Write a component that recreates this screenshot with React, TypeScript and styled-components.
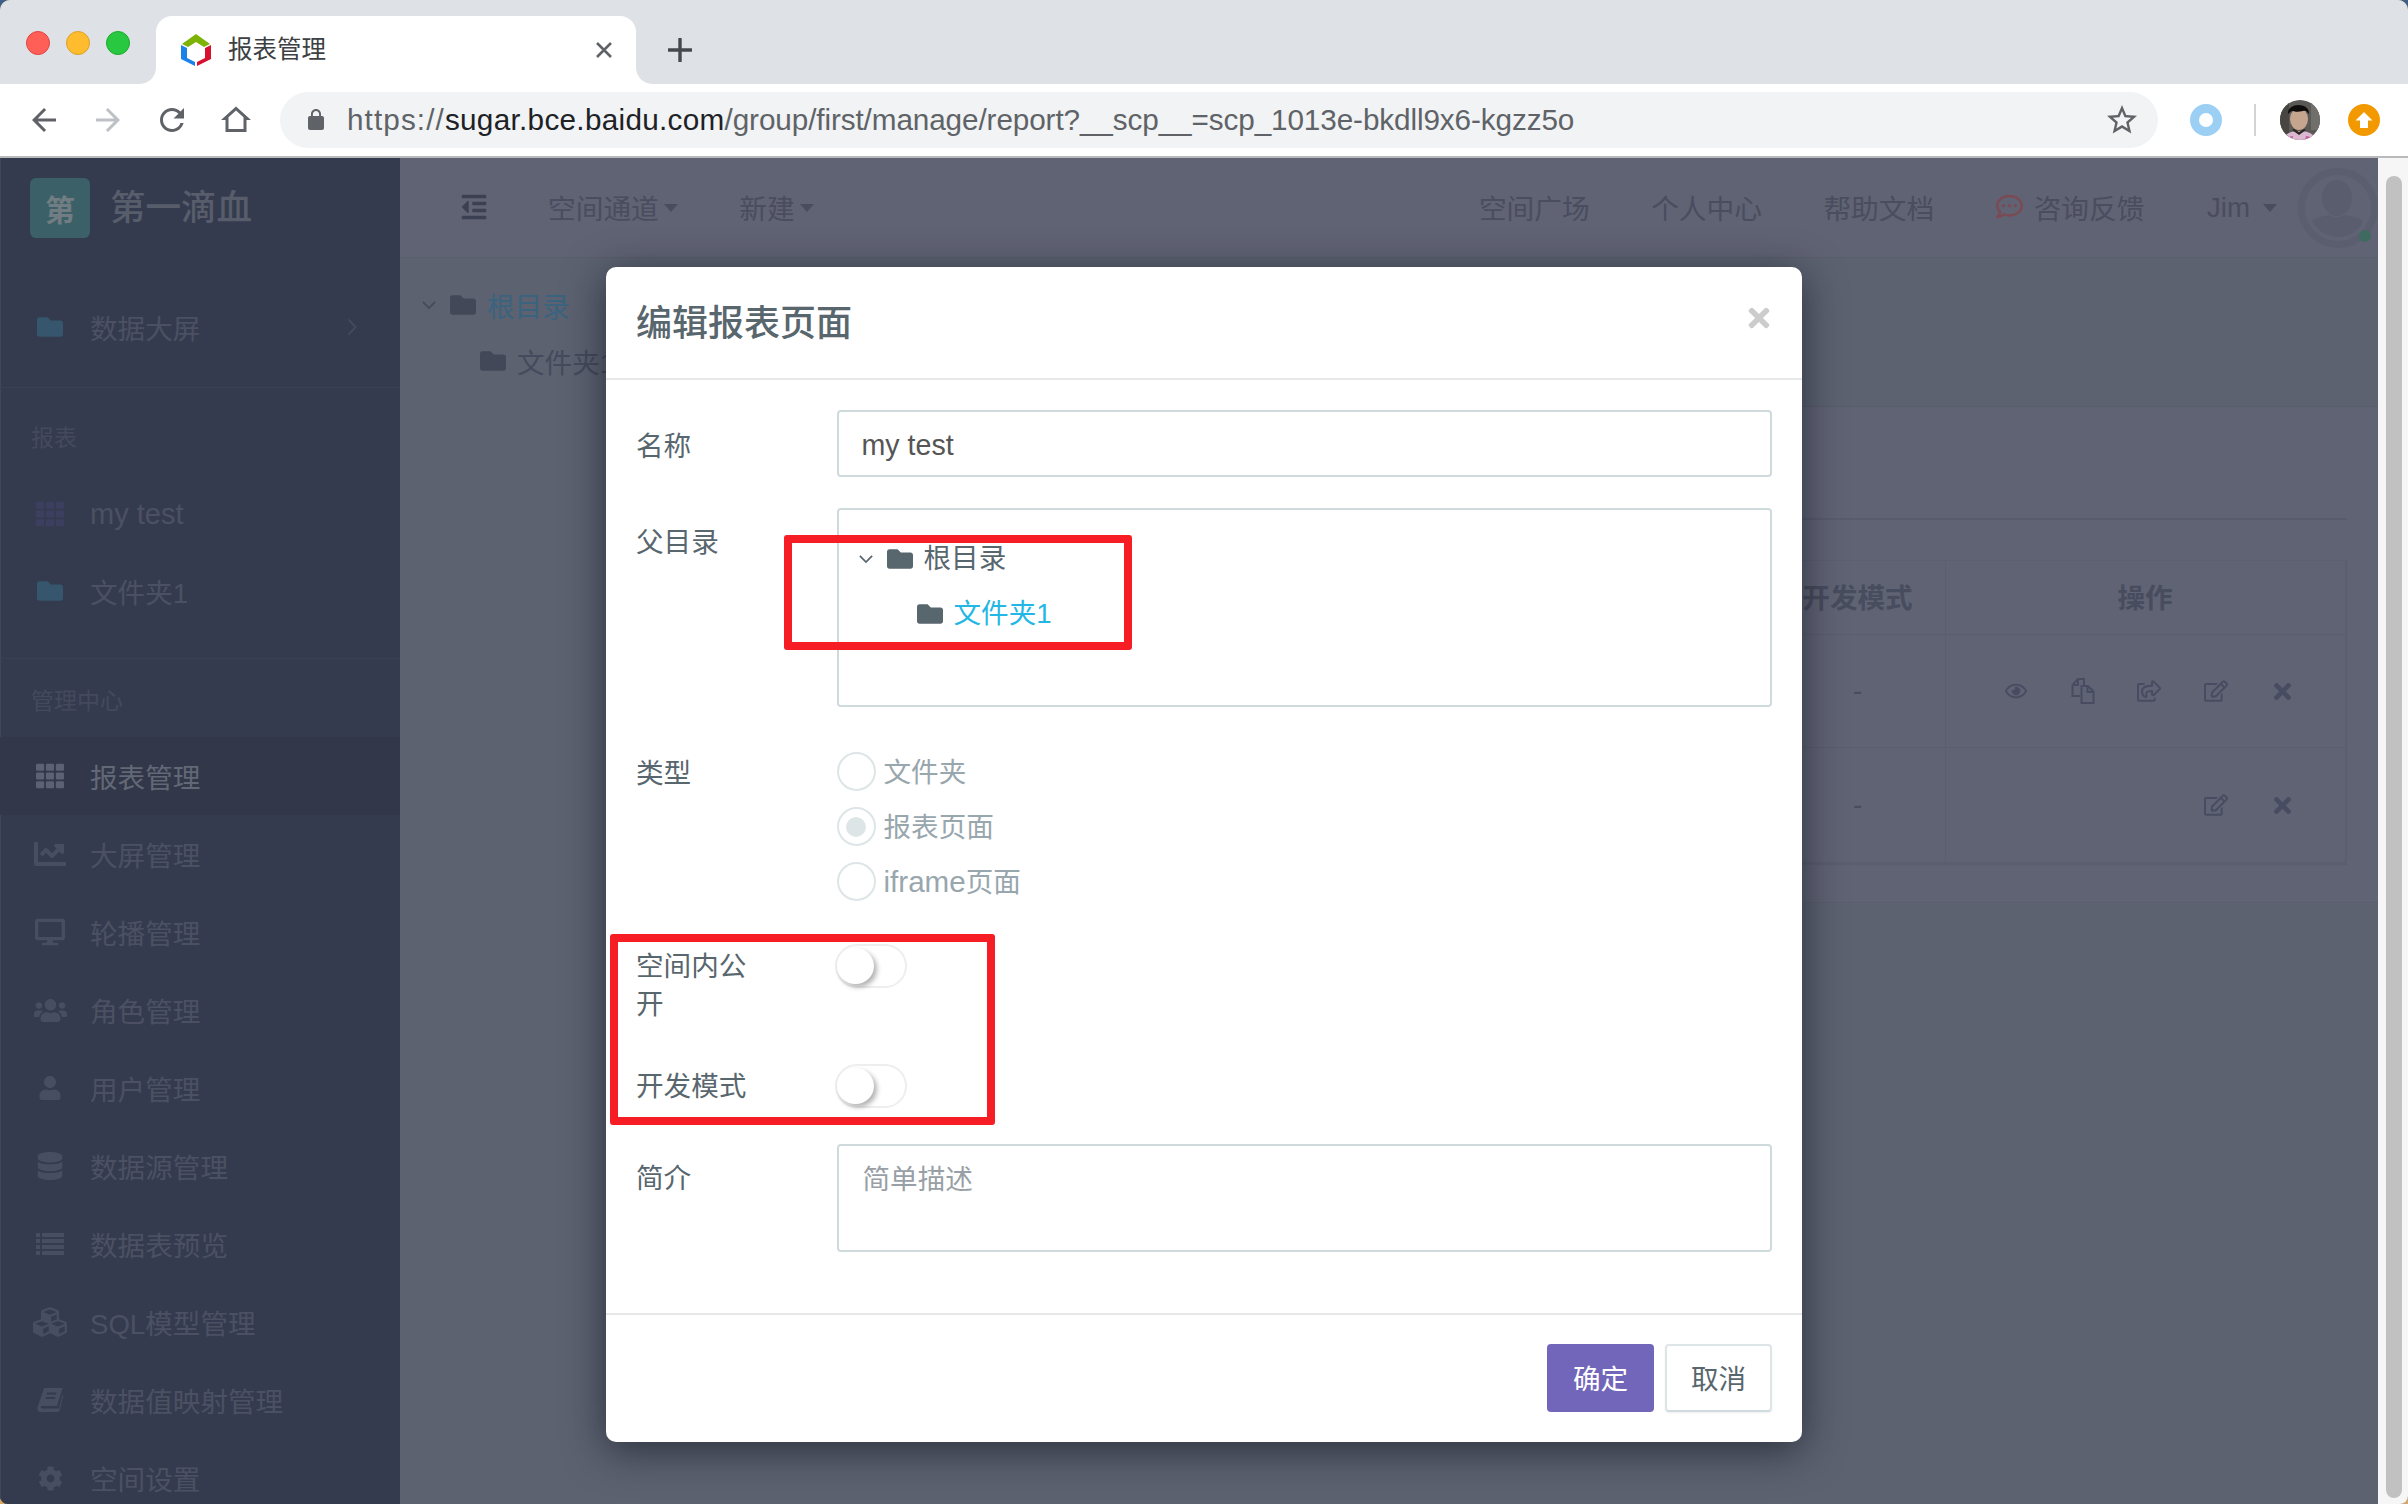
import React from 'react';
import styled, { createGlobalStyle } from 'styled-components';
import {
  FaTh, FaChartLine, FaDesktop, FaUsers, FaUser, FaDatabase, FaCubes, FaCog,
  FaFolder, FaOutdent, FaRegCommentDots, FaRegEye,
  FaRegShareSquare, FaRegEdit, FaTimes,
} from 'react-icons/fa';

const SANS = `'Liberation Sans', 'Noto Sans CJK SC', sans-serif`;

const Global = createGlobalStyle`
  html, body { margin: 0; padding: 0; height: 100%; background: #3f5f86; overflow: hidden; }
  #root { height: 100%; }
  * { box-sizing: border-box; }
  body { font-family: ${SANS}; }
`;

const Win = styled.div`
  width: 2408px; height: 1504px; display: flex; flex-direction: column; background: #d9a766;
  border-radius: 10px 10px 0 0; overflow: hidden; position: relative;
`;

/* ---------- browser chrome ---------- */
const TitleBar = styled.div`
  height: 84px; background: #dee1e6; display: flex; align-items: flex-start; flex: none;
`;
const Lights = styled.div`
  display: flex; gap: 16px; padding: 31px 0 0 26px; width: 156px; flex: none;
`;
const Light = styled.span<{ $c: string; $b: string }>`
  width: 24px; height: 24px; border-radius: 50%; background: ${p => p.$c}; border: 1px solid ${p => p.$b};
`;
const Tab = styled.div`
  position: relative; margin-top: 16px; width: 480px; height: 68px; background: #fff;
  border-radius: 16px 16px 0 0; display: flex; align-items: center; padding: 0 23px 0 24px; flex: none;
  &::before, &::after { content: ''; position: absolute; bottom: 0; width: 16px; height: 16px; }
  &::before { left: -16px; background: radial-gradient(circle at 0 0, transparent 15.5px, #fff 16px); }
  &::after { right: -16px; background: radial-gradient(circle at 100% 0, transparent 15.5px, #fff 16px); }
`;
const TabTitle = styled.span`
  margin-left: 16px; font-size: 24.5px; color: #3c4043; flex: 1; line-height: 1;
`;
const NewTab = styled.div`
  margin: 16px 0 0 32px; height: 68px; display: flex; align-items: center;
`;
const Toolbar = styled.div`
  height: 74px; background: #fff; border-bottom: 2px solid #b9babc; display: flex; align-items: flex-start; flex: none;
  padding: 8px 0 0 0;
`;
const ToolIcons = styled.div`
  display: flex; width: 280px; height: 56px; align-items: center; padding-left: 26px; gap: 28px; flex: none;
`;
const Omni = styled.div`
  width: 1878px; height: 56px; border-radius: 28px; background: #f1f3f4; display: flex; align-items: center;
  padding: 0 18px 0 24px; flex: none;
`;
const Url = styled.div`
  margin-left: 19px; flex: 1; font-size: 29.7px; color: #5f6368; white-space: nowrap; line-height: 1;
`;
const UrlScheme = styled.span` letter-spacing: 1.1px; `;
const UrlHost = styled.span` color: #202124; letter-spacing: 0.3px; `;
const UrlPath = styled.span` letter-spacing: -0.1px; `;
const Exts = styled.div`
  flex: 1; height: 56px; display: flex; align-items: center; padding-left: 32px;
`;
const ExtRing = styled.span`
  width: 32px; height: 32px; border-radius: 50%; border: 9px solid #9ccff4; flex: none;
`;
const ExtDivider = styled.span`
  width: 2px; height: 32px; background: #d2d3d5; margin: 0 24px 0 32px; flex: none;
`;
const ExtUpdate = styled.span`
  width: 32px; height: 32px; border-radius: 50%; background: #f29900; margin-left: 28px; flex: none;
  display: flex; align-items: center; justify-content: center;
`;

/* ---------- page ---------- */
const Page = styled.div`
  flex: 1; display: flex; min-height: 0; background: #5c6270; overflow: hidden; border-radius: 0 0 8px 8px;
`;
const Sidebar = styled.aside`
  width: 400px; flex: none; background: #353b4e; overflow: hidden; box-shadow: inset 1px 0 0 #41475a;
`;
const Brand = styled.div`
  height: 130px; padding: 20px 0 0 30px; display: flex; align-items: flex-start; gap: 20px;
`;
const BrandBox = styled.div`
  width: 60px; height: 60px; border-radius: 6px; background: #3c6068; color: #717d82; font-size: 30px; font-weight: 700;
  display: flex; align-items: center; justify-content: center;
`;
const BrandName = styled.div`
  font-size: 35.5px; line-height: 60px; color: #585d6c; font-weight: 500;
`;
const NavRow = styled.div<{ $active?: boolean; $h?: number; $fs?: number }>`
  height: ${p => p.$h ?? 78}px; display: flex; align-items: center; padding-left: 30px; position: relative;
  background: ${p => (p.$active ? '#323749' : 'transparent')};
  color: ${p => (p.$active ? '#636876' : '#4b5163')};
  font-size: ${p => p.$fs ?? 27.6}px;
`;
const NavIcon = styled.span<{ $c?: string; $s: number }>`
  width: 40px; display: flex; justify-content: center; align-items: center; margin-right: 20px;
  color: ${p => p.$c ?? 'inherit'}; font-size: ${p => p.$s}px; flex: none;
`;
const NavChevron = styled.span`
  margin-left: auto; margin-right: 43px; display: flex;
`;
const SideDivider = styled.div<{ $t: number }>`
  margin-top: ${p => p.$t}px; height: 1px; background: #3a4053;
`;
const SideLabel = styled.div<{ $t: number; $b: number }>`
  margin: ${p => p.$t}px 0 ${p => p.$b}px 31px; font-size: 23px; line-height: 38px; color: #444a5c;
`;

const Main = styled.main`
  flex: 1; min-width: 0; display: flex; flex-direction: column;
`;
const TopBar = styled.header`
  height: 100px; flex: none; background: #606373; border-bottom: 1px solid #5a5e6d; display: flex; align-items: center;
  padding: 0 0 2px 60px; color: #494d5f; font-size: 27.7px; gap: 61.5px; overflow: visible;
`;
const TopItem = styled.span<{ $push?: boolean; $gap?: number; $shift?: number }>`
  display: flex; align-items: center; gap: ${p => p.$gap ?? 5}px; white-space: nowrap;
  ${p => (p.$push ? 'margin-left: auto;' : '')}
  ${p => (p.$shift ? `margin-right: ${p.$shift}px;` : '')}
`;
const JimName = styled.span` padding-top: 2px; `;
const Caret = styled.span`
  width: 0; height: 0; border-left: 7.5px solid transparent; border-right: 7.5px solid transparent;
  border-top: 8px solid currentColor; margin-top: 3px;
`;
const UserArea = styled.div`
  display: flex; align-items: center; margin-left: 1px; gap: 21px; flex: none;
`;
const AvatarWrap = styled.div`
  position: relative; width: 80px; height: 80px; flex: none; margin-top: 2px;
`;
const Online = styled.span`
  position: absolute; right: 7px; bottom: 6px; width: 12px; height: 12px; border-radius: 50%; background: #3f6a62;
`;
const Content = styled.div`
  flex: 1; display: flex; min-height: 0;
`;
const TreePanel = styled.div`
  width: 400px; flex: none; padding: 18.5px 0 0 22px;
`;
const TreeRow = styled.div<{ $indent?: number; $h: number }>`
  height: ${p => p.$h}px; display: flex; align-items: center; padding-left: ${p => p.$indent ?? 0}px;
  font-size: 27.6px; white-space: nowrap;
`;
const TreeArrow = styled.span<{ $c: string }>`
  width: 14px; margin-right: 14px; display: flex; justify-content: center; color: ${p => p.$c}; flex: none;
`;
const TreeFolder = styled.span<{ $c: string }>`
  display: flex; margin-right: 11px; color: ${p => p.$c}; font-size: 26px; flex: none;
`;
const TreeText = styled.span<{ $c: string }>` color: ${p => p.$c}; `;

const RightCol = styled.div`
  flex: 1; min-width: 0; display: flex; flex-direction: column;
`;
const RightHead = styled.div` height: 148px; flex: none; `;
const Card = styled.section`
  height: 497px; flex: none; background: #606373; border-top: 1px solid #585c6b; border-bottom: 1px solid #5a5e6d;
  padding: 111px 31.5px 0 0;
`;
const CardRule = styled.div`
  height: 2px; background: #585c6c; margin-bottom: 40px;
`;
const Table = styled.div`
  display: grid; grid-template-columns: 1fr 175px 400px; grid-template-rows: 74px 113px 115px;
  border-top: 1px solid #5b5f6f; border-right: 2px solid #5a5e6e; border-bottom: 2px solid #5a5e6e;
`;
const Cell = styled.div<{ $head?: boolean }>`
  display: flex; align-items: center; justify-content: center;
  border-bottom: 1px solid #5a5e6e;
  border-left: 1px solid #5a5e6e;
  color: #474c5e; font-size: 27.6px;
  font-weight: ${p => (p.$head ? 700 : 400)};
  padding-bottom: ${p => (p.$head ? 3 : 0)}px;
`;
const Actions = styled.div`
  display: flex; align-items: center; justify-content: flex-end; padding-right: 29px; color: #474c62;
  border-bottom: 1px solid #5a5e6e; border-left: 1px solid #5a5e6e;
`;
const ActionIcon = styled.span<{ $s: number }>`
  width: 66.5px; display: flex; justify-content: center; font-size: ${p => p.$s}px;
`;
const Scrollbar = styled.div`
  width: 30px; flex: none; background: #f6f6f6; padding: 18px 6px 6px 8px;
`;
const ScrollThumb = styled.div`
  height: 100%; background: #c1c1c1; border-radius: 8px;
`;

/* ---------- modal ---------- */
const Modal = styled.div`
  position: absolute; left: 606px; top: 267px; width: 1196px; height: 1175px; background: #fff; border-radius: 10px;
  box-shadow: 0 8px 40px rgba(15, 18, 30, 0.62); display: flex; flex-direction: column; color: #58666e;
`;
const ModalHead = styled.div`
  height: 113px; flex: none; border-bottom: 2px solid #e6e8e8; padding: 36px 31px 0 30px; display: flex; justify-content: space-between;
`;
const ModalTitle = styled.div`
  font-size: 36px; line-height: 42px; font-weight: 500; color: #58666e;
`;
const ModalClose = styled.span`
  color: #cccccc; font-size: 30px; display: flex; margin-right: -3px;
`;
const ModalBody = styled.div`
  flex: 1; padding: 30px 31px 0 30px;
`;
const FormRow = styled.div<{ $mb: number }>`
  display: flex; margin-bottom: ${p => p.$mb}px;
`;
const FormLabel = styled.label<{ $pt: number; $lh?: number }>`
  width: 200.5px; flex: none; padding: ${p => p.$pt}px 86px 0 0; font-size: 27.6px; line-height: ${p => p.$lh ?? 39}px; color: #58666e;
`;
const Field = styled.div<{ $h: number }>`
  width: 935px; height: ${p => p.$h}px; border: 2px solid #cfdadd; border-radius: 4px; background: #fff;
  font-size: 27.6px; color: #555; line-height: 1; flex: none;
`;
const InputField = styled(Field)`
  display: flex; align-items: center; padding: 3px 24px 0 23px; font-size: 28.6px;
`;
const Placeholder = styled.div`
  padding: 14px 24px 0; line-height: 39px; color: #98a0a6;
`;
const TreeField = styled(Field)`
  padding: 21.5px 0 0 20px;
`;
const RadioGroup = styled.div`
  display: flex; flex-direction: column;
`;
const RadioRow = styled.div`
  height: 55px; display: flex; align-items: center; gap: 8px; font-size: 27.6px; color: #98a6ad;
`;
const RadioText = styled.span` padding-bottom: 3px; `;
const RadioLatin = styled.span` font-size: 29.6px; `;
const RadioCircle = styled.span<{ $on?: boolean }>`
  width: 39px; height: 39px; border-radius: 50%; border: 2px solid #dee5e7; background: #fff;
  display: flex; align-items: center; justify-content: center; flex: none;
  &::after { content: ''; width: 20px; height: 20px; border-radius: 50%; background: ${p => (p.$on ? '#dee5e7' : 'transparent')}; }
`;
const Toggle = styled.span`
  width: 72px; height: 44px; border-radius: 22px; border: 2px solid #eeeeee; background: #fff; padding: 2px 0 0 0; flex: none; margin-left: -1.5px;
  &::after { content: ''; display: block; width: 37px; height: 36px; border-radius: 50%; background: #fff; box-shadow: 3px 3px 5px rgba(0,0,0,.3); }
`;
const ModalFoot = styled.div`
  height: 129px; flex: none; border-top: 2px solid #e6e8e8; padding: 29px 30px 0 0; display: flex; justify-content: flex-end; gap: 11px; align-items: flex-start;
`;
const Btn = styled.button<{ $primary?: boolean }>`
  width: 107px; height: 68px; border-radius: 4px; font-family: ${SANS}; font-size: 27.6px; padding: 0 0 3px;
  border: ${p => (p.$primary ? '0' : '2px solid #dee5e7')};
  border-bottom-color: ${p => (p.$primary ? 'transparent' : '#d0dcdf')};
  background: ${p => (p.$primary ? '#7266ba' : '#fff')};
  color: ${p => (p.$primary ? '#fff' : '#58666e')};
  box-shadow: ${p => (p.$primary ? 'none' : '0 1px 2px rgba(90,90,90,.1)')};
`;
const RedBox = styled.div<{ $l: number; $t: number; $w: number; $h: number }>`
  position: absolute; left: ${p => p.$l}px; top: ${p => p.$t}px; width: ${p => p.$w}px; height: ${p => p.$h}px;
  border: 8px solid #f61d25; border-radius: 3px; pointer-events: none;
`;

/* ---------- drawings ---------- */
const ChromeIcon: React.FC<{ d: string; c?: string; s?: number }> = ({ d, c = '#5f6368', s = 36 }) => (
  <svg width={s} height={s} viewBox="0 0 24 24" fill={c} aria-hidden="true"><path d={d} /></svg>
);
const BACK = 'M20 11H7.83l5.59-5.59L12 4l-8 8 8 8 1.41-1.41L7.83 13H20v-2z';
const FORWARD = 'M4 11h12.17l-5.59-5.59L12 4l8 8-8 8-1.41-1.41L16.17 13H4v-2z';
const RELOAD = 'M17.65 6.35C16.2 4.9 14.21 4 12 4c-4.42 0-7.99 3.58-7.99 8s3.57 8 7.99 8c3.73 0 6.84-2.55 7.73-6h-2.08c-.82 2.33-3.04 4-5.65 4-3.31 0-6-2.69-6-6s2.69-6 6-6c1.66 0 3.14.69 4.22 1.78L13 11h7V4l-2.35 2.35z';
const HOME = 'M12 3L2 12h3v8h14v-8h3L12 3zm0 2.7l5 4.5V18H7v-7.8l5-4.5z';
const LOCK = 'M18 8h-1V6c0-2.76-2.24-5-5-5S7 3.24 7 6v2H6c-1.1 0-2 .9-2 2v10c0 1.1.9 2 2 2h12c1.1 0 2-.9 2-2V10c0-1.1-.9-2-2-2zM8.9 6c0-1.71 1.39-3.1 3.1-3.1 1.71 0 3.1 1.39 3.1 3.1v2H8.9V6z';
const STAR = 'M22 9.24l-7.19-.62L12 2 9.19 8.63 2 9.24l5.46 4.73L5.82 21 12 17.27 18.18 21l-1.63-7.03L22 9.24zM12 15.4l-3.76 2.27 1-4.28-3.32-2.88 4.38-.38L12 6.1l1.71 4.04 4.38.38-3.32 2.88 1 4.28L12 15.4z';

const Favicon = () => (
  <svg width="32" height="32" viewBox="0 0 32 32" aria-hidden="true">
    <polygon points="16,0 30,10 24,13 16,8 8,13 2,10" fill="#7cb305" />
    <polygon points="1,11 7,14 7,24 15,28 15,32 1,25" fill="#1a82e8" />
    <polygon points="17,28 25,24 25,14 31,11 31,25 17,32" fill="#d8102f" />
  </svg>
);
const TabX = () => (
  <svg width="18" height="18" viewBox="0 0 18 18" aria-hidden="true">
    <path d="M2 2l14 14M16 2L2 16" stroke="#5f6368" strokeWidth="2.6" />
  </svg>
);
const Plus = () => (
  <svg width="24" height="24" viewBox="0 0 24 24" aria-hidden="true">
    <path d="M12 1v22M1 12h22" stroke="#45484d" strokeWidth="3.4" strokeLinecap="round" />
  </svg>
);
const Photo = () => (
  <svg width="40" height="40" viewBox="0 0 40 40" aria-hidden="true">
    <defs><clipPath id="ph"><circle cx="20" cy="20" r="20" /></clipPath></defs>
    <g clipPath="url(#ph)">
      <rect width="40" height="40" fill="#5a5956" />
      <rect x="0" y="0" width="9" height="40" fill="#474643" />
      <rect x="31" y="0" width="9" height="30" fill="#716f6b" />
      <ellipse cx="19" cy="19" rx="9" ry="11" fill="#c6a58f" />
      <path d="M8 14C7 2 30 2 29 14c-2-3-4-4-6-3-4 1-8 1-10 0-2 0-3 1-5 3z" fill="#0f0c0c" />
      <path d="M4 40c0-6 6-9 15-9s16 3 16 9z" fill="#d9b8d0" />
      <path d="M7 40c1-3 3-4 6-4l-1 4zM26 36c3 0 5 1 6 4h-7z" fill="#c45f9a" />
      <path d="M12 30l7 5 7-5-2-1-5 3-5-3z" fill="#2c2624" />
    </g>
  </svg>
);
const UpArrow = () => (
  <svg width="18" height="16" viewBox="0 0 18 16" aria-hidden="true">
    <path d="M9 0l8.500 8.500H13V16H5V8.500H.5z" fill="#fff" />
  </svg>
);
const UserAvatar = () => (
  <svg width="80" height="80" viewBox="0 0 80 80" aria-hidden="true">
    <defs><clipPath id="ua"><circle cx="40" cy="40" r="29" /></clipPath></defs>
    <circle cx="40" cy="40" r="36.500" fill="none" stroke="#5a5e6e" strokeWidth="7" />
    <ellipse cx="39" cy="30" rx="15" ry="18" fill="#595d6d" />
    <path clipPath="url(#ua)" d="M14 52c6-3 13-4 18-5 3 3 11 3 14 0 5 1 13 2 18 5v28H14z" fill="#595d6d" />
  </svg>
);
const ThinRight = () => (
  <svg width="10" height="18" viewBox="0 0 10 18" aria-hidden="true">
    <path d="M1.500 1.500L8.500 9l-7 7.500" fill="none" stroke="#464c5e" strokeWidth="1.8" />
  </svg>
);
const ThinDown = () => (
  <svg width="16" height="10" viewBox="0 0 16 10" aria-hidden="true">
    <path d="M1 1.500l7 7 7-7" fill="none" stroke="currentColor" strokeWidth="2" />
  </svg>
);
/* FontAwesome 4 style glyphs that the icon packages lack */
const SquareList = () => (
  <svg width="28" height="22" viewBox="0 0 28 22" fill="currentColor" aria-hidden="true">
    <rect x="0" y="0" width="4" height="4" /><rect x="6" y="0" width="22" height="4" />
    <rect x="0" y="6" width="4" height="4" /><rect x="6" y="6" width="22" height="4" />
    <rect x="0" y="12" width="4" height="4" /><rect x="6" y="12" width="22" height="4" />
    <rect x="0" y="18" width="4" height="4" /><rect x="6" y="18" width="22" height="4" />
  </svg>
);
const SlantBook = () => (
  <svg width="26" height="24" viewBox="0 0 26 24" aria-hidden="true">
    <path fillRule="evenodd" fill="currentColor"
      d="M7 0h18.500L20 18H5.500C3.500 18 3 20 5 20.500h17L25.500 7H26v2L22.500 22.500 21.500 24H4C1.500 24 0 22 .5 19.500zM10 4.500l-.5 2H19l.5-2zM9 9l-.5 2H18l.5-2z" />
  </svg>
);
const FilesOutline = () => (
  <svg width="24" height="26" viewBox="0 0 24 26" fill="none" stroke="currentColor" strokeWidth="2" aria-hidden="true">
    <path d="M9 18H1.500V7L7 1h6v7" />
    <path d="M7 1v6H1.500" />
    <path d="M10.500 8H17l5.500 5.500V25H10.500z" />
    <path d="M16.500 8v6h6" />
  </svg>
);

const MANAGE: Array<[React.ComponentType, number, string]> = [
  [FaTh, 28, '报表管理'],
  [FaChartLine, 32, '大屏管理'],
  [FaDesktop, 30, '轮播管理'],
  [FaUsers, 33, '角色管理'],
  [FaUser, 24, '用户管理'],
  [FaDatabase, 28, '数据源管理'],
  [SquareList, 28, '数据表预览'],
  [FaCubes, 34, 'SQL模型管理'],
  [SlantBook, 26, '数据值映射管理'],
  [FaCog, 25, '空间设置'],
];

export default function App() {
  return (
    <Win>
      <Global />
      <TitleBar>
        <Lights>
          <Light $c="#ff5f57" $b="#e0443e" />
          <Light $c="#febc2e" $b="#dea123" />
          <Light $c="#28c840" $b="#1aab29" />
        </Lights>
        <Tab>
          <Favicon />
          <TabTitle>报表管理</TabTitle>
          <TabX />
        </Tab>
        <NewTab><Plus /></NewTab>
      </TitleBar>
      <Toolbar>
        <ToolIcons>
          <ChromeIcon d={BACK} />
          <ChromeIcon d={FORWARD} c="#bdc1c6" />
          <ChromeIcon d={RELOAD} />
          <ChromeIcon d={HOME} />
        </ToolIcons>
        <Omni>
          <ChromeIcon d={LOCK} s={24} />
          <Url>
            <UrlScheme>https://</UrlScheme>
            <UrlHost>sugar.bce.baidu.com</UrlHost>
            <UrlPath>/group/first/manage/report?__scp__=scp_1013e-bkdll9x6-kgzz5o</UrlPath>
          </Url>
          <ChromeIcon d={STAR} s={36} />
        </Omni>
        <Exts>
          <ExtRing />
          <ExtDivider />
          <Photo />
          <ExtUpdate><UpArrow /></ExtUpdate>
        </Exts>
      </Toolbar>

      <Page>
        <Sidebar>
          <Brand>
            <BrandBox>第</BrandBox>
            <BrandName>第一滴血</BrandName>
          </Brand>
          <NavRow>
            <NavIcon $c="#35566c" $s={26}><FaFolder /></NavIcon>
            数据大屏
            <NavChevron><ThinRight /></NavChevron>
          </NavRow>
          <SideDivider $t={21} />
          <SideLabel $t={31} $b={19}>报表</SideLabel>
          <NavRow $h={76} $fs={29}>
            <NavIcon $c="#3d3f60" $s={28}><FaTh /></NavIcon>
            my test
          </NavRow>
          <NavRow>
            <NavIcon $c="#35566c" $s={26}><FaFolder /></NavIcon>
            文件夹1
          </NavRow>
          <SideDivider $t={28} />
          <SideLabel $t={23} $b={17}>管理中心</SideLabel>
          {MANAGE.map(([Icon, size, label], i) => (
            <NavRow key={label} $active={i === 0}>
              <NavIcon $c={i === 0 ? '#5c6273' : '#474e62'} $s={size}><Icon /></NavIcon>
              {label}
            </NavRow>
          ))}
        </Sidebar>

        <Main>
          <TopBar>
            <TopItem $shift={-1.5}><FaOutdent color="#3c4053" size={28} /></TopItem>
            <TopItem>空间通道<Caret /></TopItem>
            <TopItem>新建<Caret /></TopItem>
            <TopItem $push>空间广场</TopItem>
            <TopItem>个人中心</TopItem>
            <TopItem>帮助文档</TopItem>
            <TopItem $gap={11}><FaRegCommentDots color="#7a4a55" size={27} />咨询反馈</TopItem>
            <UserArea>
              <TopItem $gap={13}><JimName>Jim</JimName><Caret /></TopItem>
              <AvatarWrap>
                <UserAvatar />
                <Online />
              </AvatarWrap>
            </UserArea>
          </TopBar>
          <Content>
            <TreePanel>
              <TreeRow $h={56}>
                <TreeArrow $c="#454a5c"><ThinDown /></TreeArrow>
                <TreeFolder $c="#434859"><FaFolder /></TreeFolder>
                <TreeText $c="#3a6380">根目录</TreeText>
              </TreeRow>
              <TreeRow $h={56} $indent={58}>
                <TreeFolder $c="#434859"><FaFolder /></TreeFolder>
                <TreeText $c="#454a5c">文件夹1</TreeText>
              </TreeRow>
            </TreePanel>
            <RightCol>
              <RightHead />
              <Card>
                <CardRule />
                <Table>
                  <Cell $head />
                  <Cell $head>开发模式</Cell>
                  <Cell $head>操作</Cell>
                  <Cell />
                  <Cell>-</Cell>
                  <Actions>
                    <ActionIcon $s={22}><FaRegEye /></ActionIcon>
                    <ActionIcon $s={24}><FilesOutline /></ActionIcon>
                    <ActionIcon $s={24}><FaRegShareSquare /></ActionIcon>
                    <ActionIcon $s={24}><FaRegEdit /></ActionIcon>
                    <ActionIcon $s={25}><FaTimes /></ActionIcon>
                  </Actions>
                  <Cell />
                  <Cell>-</Cell>
                  <Actions>
                    <ActionIcon $s={24}><FaRegEdit /></ActionIcon>
                    <ActionIcon $s={25}><FaTimes /></ActionIcon>
                  </Actions>
                </Table>
              </Card>
            </RightCol>
          </Content>
        </Main>
        <Scrollbar><ScrollThumb /></Scrollbar>
      </Page>

      <Modal>
        <ModalHead>
          <ModalTitle>编辑报表页面</ModalTitle>
          <ModalClose><FaTimes /></ModalClose>
        </ModalHead>
        <ModalBody>
          <FormRow $mb={31}>
            <FormLabel $pt={16.5}>名称</FormLabel>
            <InputField $h={67}>my test</InputField>
          </FormRow>
          <FormRow $mb={37}>
            <FormLabel $pt={15}>父目录</FormLabel>
            <TreeField $h={199}>
              <TreeRow $h={55}>
                <TreeArrow $c="#58666e"><ThinDown /></TreeArrow>
                <TreeFolder $c="#58666e"><FaFolder /></TreeFolder>
                <TreeText $c="#58666e">根目录</TreeText>
              </TreeRow>
              <TreeRow $h={55} $indent={58}>
                <TreeFolder $c="#58666e"><FaFolder /></TreeFolder>
                <TreeText $c="#23b7e5">文件夹1</TreeText>
              </TreeRow>
            </TreeField>
          </FormRow>
          <FormRow $mb={35}>
            <FormLabel $pt={9.5}>类型</FormLabel>
            <RadioGroup>
              <RadioRow><RadioCircle /><RadioText>文件夹</RadioText></RadioRow>
              <RadioRow><RadioCircle $on /><RadioText>报表页面</RadioText></RadioRow>
              <RadioRow><RadioCircle /><RadioText><RadioLatin>iframe</RadioLatin>页面</RadioText></RadioRow>
            </RadioGroup>
          </FormRow>
          <FormRow $mb={40}>
            <FormLabel $pt={3.5} $lh={38}>空间内公开</FormLabel>
            <Toggle />
          </FormRow>
          <FormRow $mb={36}>
            <FormLabel $pt={3.5}>开发模式</FormLabel>
            <Toggle />
          </FormRow>
          <FormRow $mb={0}>
            <FormLabel $pt={15}>简介</FormLabel>
            <Field $h={108}><Placeholder>简单描述</Placeholder></Field>
          </FormRow>
        </ModalBody>
        <ModalFoot>
          <Btn $primary>确定</Btn>
          <Btn>取消</Btn>
        </ModalFoot>
        <RedBox $l={178} $t={268} $w={348} $h={115} />
        <RedBox $l={4} $t={667} $w={385} $h={191} />
      </Modal>
    </Win>
  );
}
